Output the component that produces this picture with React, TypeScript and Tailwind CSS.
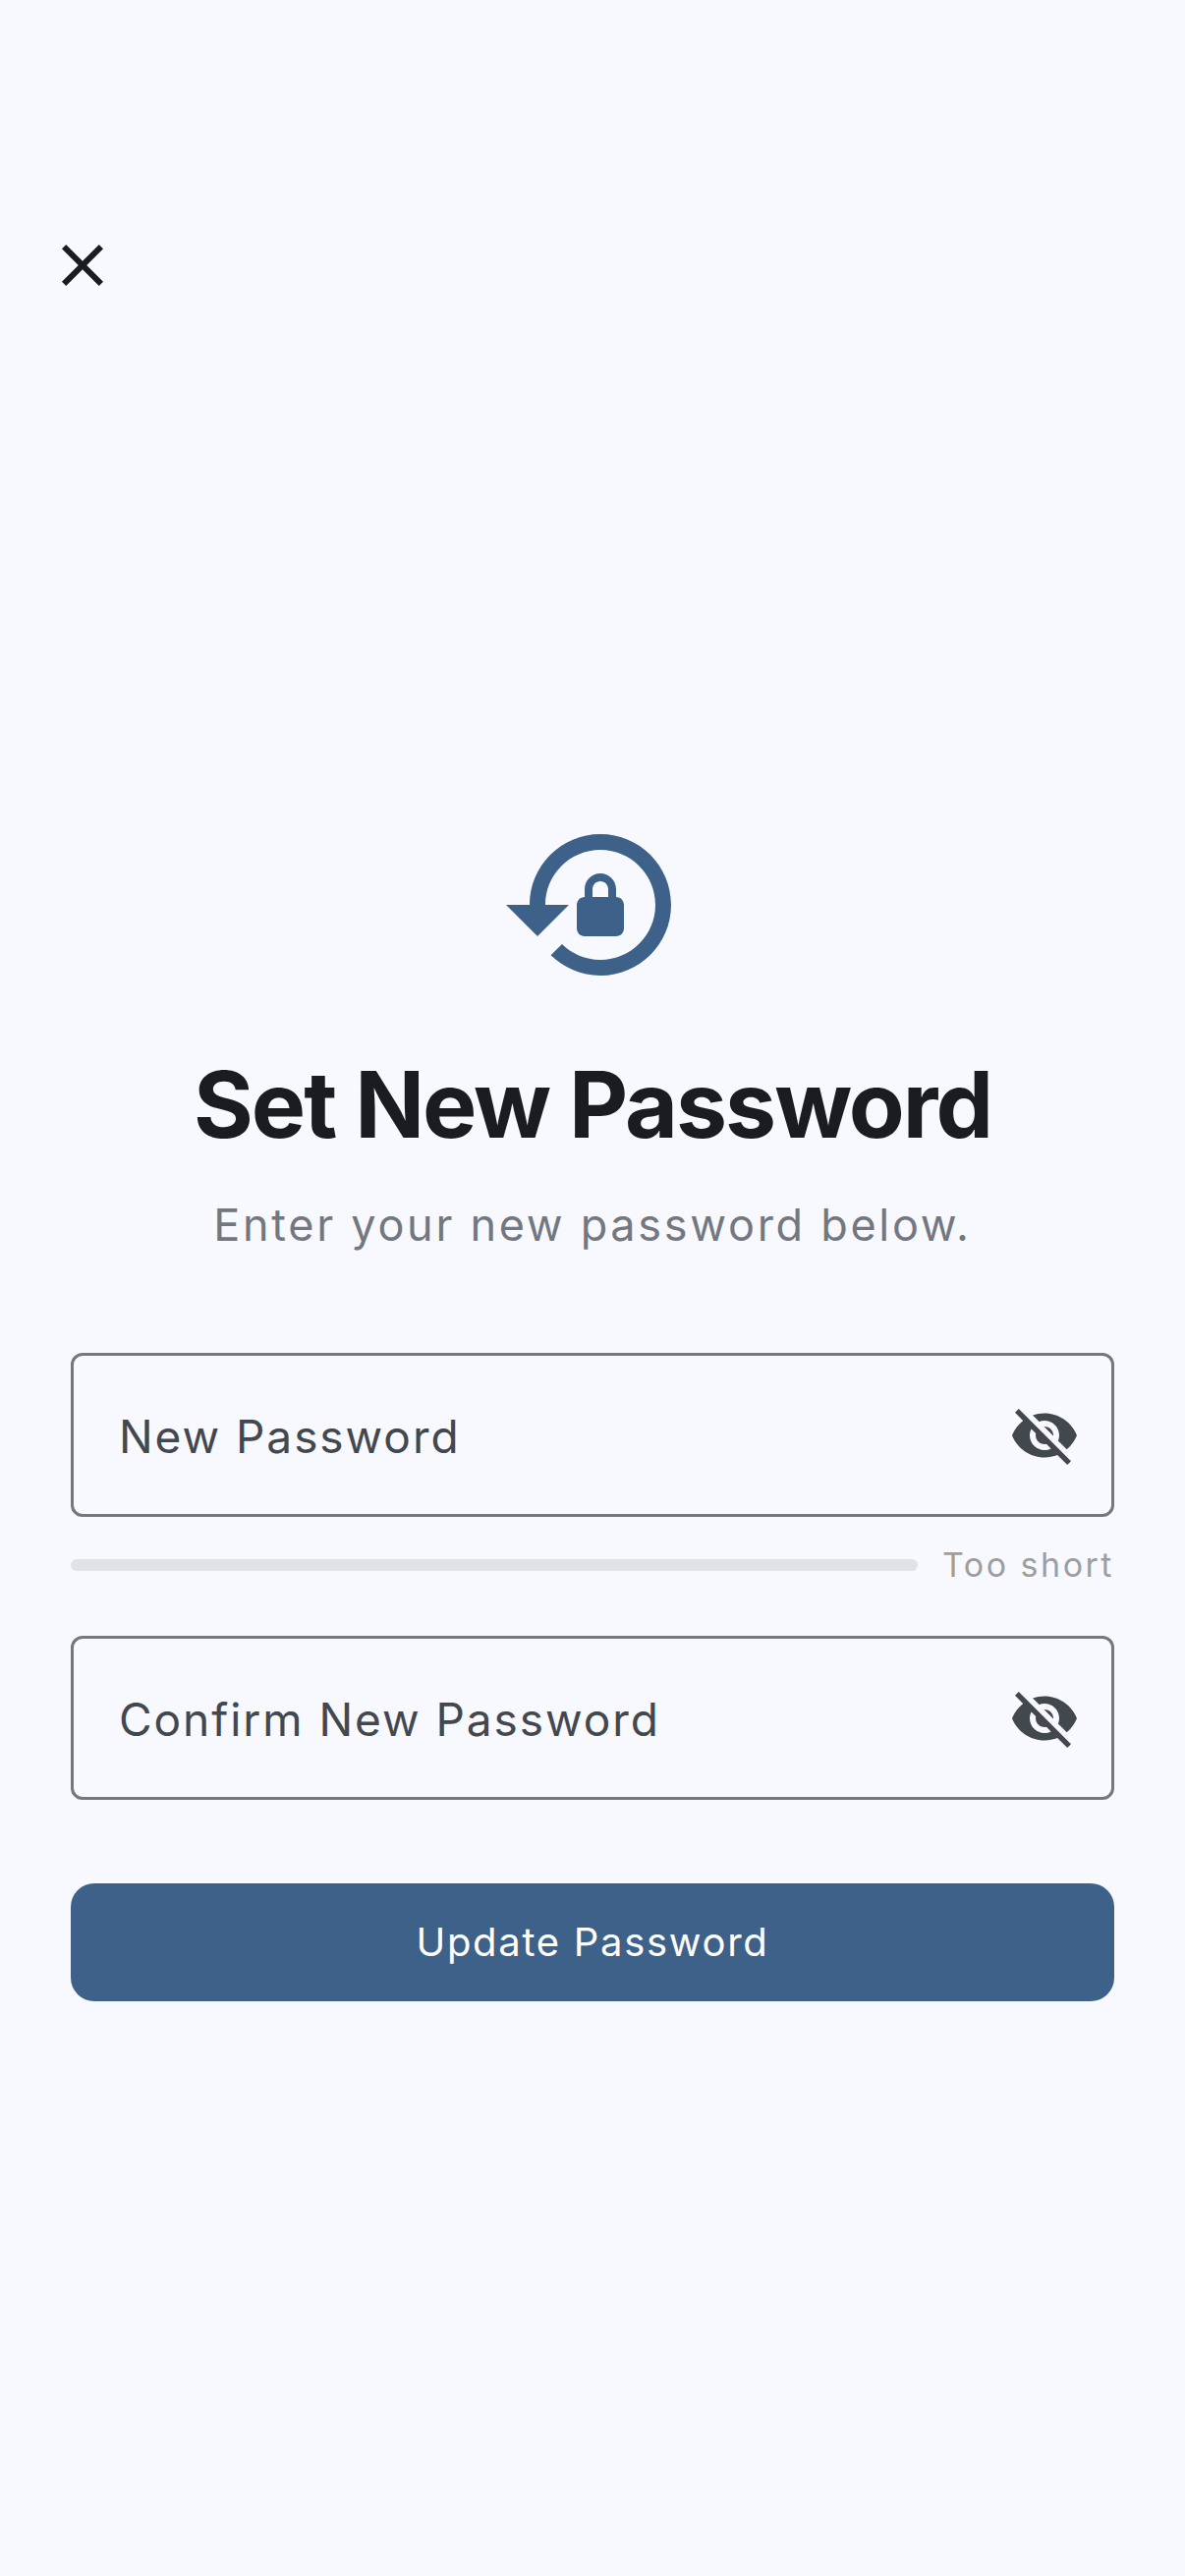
import React from "react";

const Eye = () => (
  <svg viewBox="0 0 24 24" className="w-[72px] h-[72px] fill-[#43474e] shrink-0">
    <path d="M12 7c2.76 0 5 2.24 5 5 0 .65-.13 1.26-.36 1.83l2.92 2.92c1.51-1.26 2.7-2.89 3.43-4.75-1.73-4.39-6-7.5-11-7.5-1.4 0-2.74.25-3.98.7l2.16 2.16C10.74 7.13 11.35 7 12 7zM2 4.27l2.28 2.28.46.46C3.08 8.3 1.78 10.02 1 12c1.73 4.39 6 7.5 11 7.5 1.55 0 3.03-.3 4.38-.84l.42.42L19.73 22 21 20.73 3.27 3 2 4.27zM7.53 9.8l1.55 1.55c-.05.21-.08.43-.08.65 0 1.66 1.34 3 3 3 .22 0 .44-.03.65-.08l1.55 1.55c-.67.33-1.41.53-2.2.53-2.76 0-5-2.24-5-5 0-.79.2-1.53.53-2.2zm4.31-.78l3.15 3.15.02-.16c0-1.66-1.34-3-3-3l-.17.01z" />
  </svg>
);

const Field = ({ label }: { label: string }) => (
  <div className="h-[167px] rounded-[12px] border-[3px] border-[#73777f] flex items-center justify-between pl-[46px] pr-[32px]">
    <span className="text-[46px] leading-[72px] tracking-[1.95px] pt-[2px] text-[#43474e]">{label}</span>
    <Eye />
  </div>
);

export default function App() {
  return (
    <div className="w-[1206px] h-[2622px] bg-[#f8f9ff] overflow-hidden flex flex-col font-['Inter',sans-serif]">
      <div className="pt-[234px] pl-[48px]">
        <svg viewBox="0 0 24 24" className="w-[72px] h-[72px] fill-[#191c20]">
          <path d="M19 6.41 17.59 5 12 10.59 6.41 5 5 6.41 10.59 12 5 17.59 6.41 19 12 13.41 17.59 19 19 17.59 13.41 12z" />
        </svg>
      </div>
      <div className="flex flex-col items-center mt-[519px]">
        <svg viewBox="0 0 24 24" className="w-[192px] h-[192px] fill-[#3e6189]">
          <path d="M13 3c-4.97 0-9 4.03-9 9H1l4 4 4-4H6c0-3.86 3.14-7 7-7s7 3.14 7 7-3.14 7-7 7c-1.9 0-3.62-.76-4.88-1.99L6.7 18.42C8.32 20.01 10.55 21 13 21c4.97 0 9-4.03 9-9s-4.03-9-9-9zm2 8v-1c0-1.1-.9-2-2-2s-2 .9-2 2v1c-.55 0-1 .45-1 1v3c0 .55.45 1 1 1h4c.55 0 1-.45 1-1v-3c0-.55-.45-1-1-1zm-1 0h-2v-1c0-.55.45-1 1-1s1 .45 1 1v1z" />
        </svg>
        <h1 className="mt-[47px] text-[93px] leading-[120px] font-bold text-[#191c20] tracking-[-2.05px]">Set New Password</h1>
        <p className="mt-[27px] text-[45px] leading-[72px] tracking-[2.7px] text-[#73777f]">Enter your new password below.</p>
      </div>
      <div className="mx-[72px] mt-[94px] flex flex-col">
        <Field label="New Password" />
        <div className="mt-[28px] flex items-center gap-[25px]">
          <div className="flex-1 h-[12px] rounded-full bg-[#e1e2e8]" />
          <span className="text-[34px] leading-[42px] tracking-[2.5px] text-[#9e9e9e]">Too short</span>
        </div>
        <div className="mt-[51px]"><Field label="Confirm New Password" /></div>
        <button className="mt-[85px] h-[120px] rounded-[24px] bg-[#3e6189] text-[#fff] text-[40px] font-normal tracking-[1.7px]">Update Password</button>
      </div>
    </div>
  );
}
